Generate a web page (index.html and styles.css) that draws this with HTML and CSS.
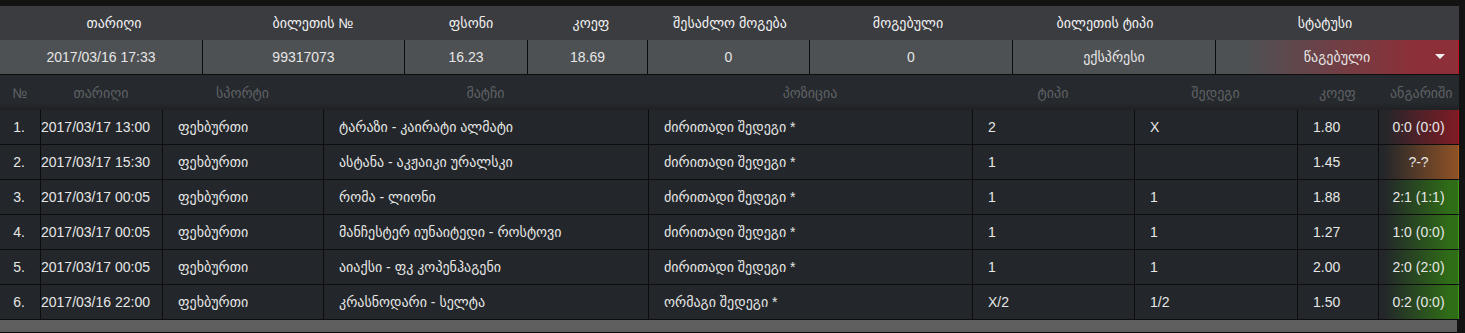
FILE: index.html
```html
<!DOCTYPE html>
<html lang="ka">
<head>
<meta charset="utf-8">
<title>ბილეთი</title>
<link rel="stylesheet" href="styles.css">
</head>
<body>
<div class="ticket">
  <div class="sum-head">
    <div>თარიღი</div>
    <div>ბილეთის №</div>
    <div>ფსონი</div>
    <div>კოეფ</div>
    <div>შესაძლო მოგება</div>
    <div>მოგებული</div>
    <div>ბილეთის ტიპი</div>
    <div>სტატუსი</div>
  </div>
  <div class="sum-vals">
    <div>2017/03/16 17:33</div>
    <div>99317073</div>
    <div>16.23</div>
    <div>18.69</div>
    <div>0</div>
    <div>0</div>
    <div>ექსპრესი</div>
    <div class="status lost">წაგებული<span class="caret"></span></div>
  </div>
  <div class="events">
    <div class="ev-head">
      <div>№</div>
      <div>თარიღი</div>
      <div>სპორტი</div>
      <div>მატჩი</div>
      <div>პოზიცია</div>
      <div>ტიპი</div>
      <div>შედეგი</div>
      <div>კოეფ</div>
      <div class="clip">ანგარიში</div>
    </div>
    <div class="ev-row">
      <div class="num">1.</div>
      <div class="date">2017/03/17 13:00</div>
      <div>ფეხბურთი</div>
      <div>ტარაზი - კაირატი ალმატი</div>
      <div>ძირითადი შედეგი *</div>
      <div>2</div>
      <div>X</div>
      <div>1.80</div>
      <div class="score red">0:0 (0:0)</div>
    </div>
    <div class="ev-row">
      <div class="num">2.</div>
      <div class="date">2017/03/17 15:30</div>
      <div>ფეხბურთი</div>
      <div>ასტანა - აკჟაიკი ურალსკი</div>
      <div>ძირითადი შედეგი *</div>
      <div>1</div>
      <div></div>
      <div>1.45</div>
      <div class="score orange">?-?</div>
    </div>
    <div class="ev-row">
      <div class="num">3.</div>
      <div class="date">2017/03/17 00:05</div>
      <div>ფეხბურთი</div>
      <div>რომა - ლიონი</div>
      <div>ძირითადი შედეგი *</div>
      <div>1</div>
      <div>1</div>
      <div>1.88</div>
      <div class="score green">2:1 (1:1)</div>
    </div>
    <div class="ev-row">
      <div class="num">4.</div>
      <div class="date">2017/03/17 00:05</div>
      <div>ფეხბურთი</div>
      <div>მანჩესტერ იუნაიტედი - როსტოვი</div>
      <div>ძირითადი შედეგი *</div>
      <div>1</div>
      <div>1</div>
      <div>1.27</div>
      <div class="score green">1:0 (0:0)</div>
    </div>
    <div class="ev-row">
      <div class="num">5.</div>
      <div class="date">2017/03/17 00:05</div>
      <div>ფეხბურთი</div>
      <div>აიაქსი - ფკ კოპენჰაგენი</div>
      <div>ძირითადი შედეგი *</div>
      <div>1</div>
      <div>1</div>
      <div>2.00</div>
      <div class="score green">2:0 (2:0)</div>
    </div>
    <div class="ev-row">
      <div class="num">6.</div>
      <div class="date">2017/03/16 22:00</div>
      <div>ფეხბურთი</div>
      <div>კრასნოდარი - სელტა</div>
      <div>ორმაგი შედეგი *</div>
      <div>X/2</div>
      <div>1/2</div>
      <div>1.50</div>
      <div class="score green">0:2 (0:0)</div>
    </div>
  </div>
  <div class="hscroll"></div>
</div>
</body>
</html>
```
FILE: styles.css
```css
html, body {
  margin: 0;
  padding: 0;
  background: #131313;
}
body {
  font-family: "Liberation Sans", "DejaVu Sans", "Noto Sans", sans-serif;
  font-size: 14px;
  color: #e6e6e6;
  overflow: hidden;
}
.ticket {
  width: 1459px;
  padding-top: 6px;
}
.sum-head {
  display: grid;
  grid-template-columns: 228px 170px 146px 94px 184px 172px 222px 218px 25px;
  height: 34px;
  background: #3b3c40;
  color: #f2f2f2;
  text-transform: uppercase;
}
.sum-head > div {
  display: flex;
  align-items: center;
  justify-content: center;
  white-space: nowrap;
}
.sum-vals {
  display: grid;
  grid-template-columns: 202px 202px 123px 120px 162px 203px 203px 244px;
  height: 35px;
  background: #4e5154;
  border-bottom: 1px solid #0d0d0d;
  box-sizing: border-box;
  text-transform: uppercase;
}
.sum-vals > div {
  display: flex;
  align-items: center;
  justify-content: center;
  white-space: nowrap;
  box-sizing: border-box;
}
.sum-vals > div + div {
  border-left: 1px solid #0d0d0d;
}
.status {
  position: relative;
}
.status.lost {
  background: linear-gradient(90deg, #4e5154 12%, #8d2f38 82%);
  border-right: 1px solid #c0101c;
}
.caret {
  position: absolute;
  right: 13px;
  top: 14px;
  width: 0;
  height: 0;
  border-left: 5px solid transparent;
  border-right: 5px solid transparent;
  border-top: 5px solid #f0f0f0;
}
.ev-head,
.ev-row {
  display: grid;
  grid-template-columns: 40px 122px 161px 325px 324px 162px 163px 81px 81px;
  box-sizing: border-box;
}
.ev-head {
  height: 35px;
  background: linear-gradient(180deg, #26292d 0%, #26292d 80%, #1e2023 100%);
  color: #5f6266;
  text-transform: uppercase;
}
.ev-head > div {
  display: flex;
  align-items: center;
  justify-content: center;
  white-space: nowrap;
  overflow: hidden;
}
.ev-head > .clip {
  justify-content: flex-start;
  padding-left: 12px;
}
.ev-row {
  height: 35px;
  background: #23262a;
  border-bottom: 1px solid #0d0d0d;
  text-transform: uppercase;
}
.ev-row > div {
  display: flex;
  align-items: center;
  padding-left: 15px;
  white-space: nowrap;
  box-sizing: border-box;
}
.ev-row > div + div {
  border-left: 1px solid #0d0d0d;
}
.ev-row > .num {
  justify-content: flex-end;
  padding-left: 0;
  padding-right: 15px;
}
.ev-row > .date {
  padding-left: 0;
}
.ev-row > .score {
  justify-content: center;
  padding-left: 0;
  border-right: 1px solid transparent;
}
.score.red {
  background: linear-gradient(90deg, #23262a 5%, #7a1c25 95%);
  border-right-color: #b5101c;
}
.score.orange {
  background: linear-gradient(90deg, #23262a 5%, #8a5026 95%);
  border-right-color: #b5601c;
}
.score.green {
  background: linear-gradient(90deg, #23262a 5%, #2f6d17 90%);
  border-right-color: #3f9a1a;
}
.hscroll {
  height: 12px;
  width: 1457px;
  background: #5f5f5f;
  border-bottom: 1px solid #0a0a0a;
}
```
